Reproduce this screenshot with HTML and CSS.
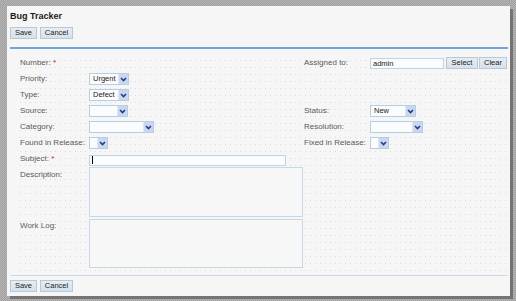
FILE: index.html
```html
<!DOCTYPE html>
<html>
<head>
<meta charset="utf-8">
<link rel="stylesheet" href="styles.css">
</head>
<body>
<div class="panel">
  <div class="title">Bug Tracker</div>
  <div class="toolbar">
    <button class="btn btn-save">Save</button>
    <button class="btn btn-cancel">Cancel</button>
  </div>
  <div class="rule"></div>
  <div class="form">
    <div class="lbl r1">Number: <span class="req">*</span></div>
    <div class="fld r1"></div>
    <div class="lbl r1">Assigned to:</div>
    <div class="fld r1 assign">
      <div class="input w-assign">admin</div>
      <button class="btn btn-select">Select</button>
      <button class="btn btn-clear">Clear</button>
    </div>

    <div class="lbl">Priority:</div>
    <div class="fld"><div class="select w40"><span>Urgent</span><i class="arrow"><svg width="7" height="5" viewBox="0 0 7 5"><path d="M1 1 L3.5 3.5 L6 1" fill="none" stroke="#1e3d8a" stroke-width="1.6"/></svg></i></div></div>
    <div class="lbl"></div><div class="fld"></div>

    <div class="lbl">Type:</div>
    <div class="fld"><div class="select w40"><span>Defect</span><i class="arrow"><svg width="7" height="5" viewBox="0 0 7 5"><path d="M1 1 L3.5 3.5 L6 1" fill="none" stroke="#1e3d8a" stroke-width="1.6"/></svg></i></div></div>
    <div class="lbl"></div><div class="fld"></div>

    <div class="lbl">Source:</div>
    <div class="fld"><div class="select w39"><span></span><i class="arrow"><svg width="7" height="5" viewBox="0 0 7 5"><path d="M1 1 L3.5 3.5 L6 1" fill="none" stroke="#1e3d8a" stroke-width="1.6"/></svg></i></div></div>
    <div class="lbl">Status:</div>
    <div class="fld"><div class="select w46"><span>New</span><i class="arrow"><svg width="7" height="5" viewBox="0 0 7 5"><path d="M1 1 L3.5 3.5 L6 1" fill="none" stroke="#1e3d8a" stroke-width="1.6"/></svg></i></div></div>

    <div class="lbl">Category:</div>
    <div class="fld"><div class="select w65"><span></span><i class="arrow"><svg width="7" height="5" viewBox="0 0 7 5"><path d="M1 1 L3.5 3.5 L6 1" fill="none" stroke="#1e3d8a" stroke-width="1.6"/></svg></i></div></div>
    <div class="lbl">Resolution:</div>
    <div class="fld"><div class="select w53"><span></span><i class="arrow"><svg width="7" height="5" viewBox="0 0 7 5"><path d="M1 1 L3.5 3.5 L6 1" fill="none" stroke="#1e3d8a" stroke-width="1.6"/></svg></i></div></div>

    <div class="lbl">Found in Release:</div>
    <div class="fld"><div class="select w19"><span></span><i class="arrow"><svg width="7" height="5" viewBox="0 0 7 5"><path d="M1 1 L3.5 3.5 L6 1" fill="none" stroke="#1e3d8a" stroke-width="1.6"/></svg></i></div></div>
    <div class="lbl">Fixed in Release:</div>
    <div class="fld"><div class="select w19"><span></span><i class="arrow"><svg width="7" height="5" viewBox="0 0 7 5"><path d="M1 1 L3.5 3.5 L6 1" fill="none" stroke="#1e3d8a" stroke-width="1.6"/></svg></i></div></div>

    <div class="lbl">Subject: <span class="req">*</span></div>
    <div class="fld"><div class="input w-subject"><span class="caret"></span></div></div>
    <div class="lbl"></div><div class="fld"></div>

    <div class="lbl top">Description:</div>
    <div class="fld top"><div class="textarea h-desc"></div></div>
    <div class="lbl"></div><div class="fld"></div>

    <div class="lbl top">Work Log:</div>
    <div class="fld top"><div class="textarea h-log"></div></div>
    <div class="lbl"></div><div class="fld"></div>
  </div>
  <div class="rule2"></div>
  <div class="toolbar bottom">
    <button class="btn btn-save">Save</button>
    <button class="btn btn-cancel">Cancel</button>
  </div>
</div>
</body>
</html>
```

FILE: styles.css
```css
html, body {
  margin: 0;
  padding: 0;
}
body {
  width: 516px;
  height: 301px;
  overflow: hidden;
  background: repeating-conic-gradient(#9f9f9f 0 25%, #b6b6b6 0 50%) 0 0 / 2px 2px;
  font-family: "Liberation Sans", Arial, sans-serif;
}
.panel {
  margin: 6px 0 0 7px;
  width: 503px;
  height: 290px;
  box-sizing: border-box;
  padding: 0 2px 0 3px;
  background: #f6f6f6;
  box-shadow: 3px 3px 0 #747474;
  display: flex;
  flex-direction: column;
}
.title {
  height: 20px;
  line-height: 15px;
  padding-top: 3px;
  box-sizing: border-box;
  font-size: 9px;
  font-weight: bold;
  color: #1a1a1a;
}
.toolbar {
  display: flex;
  gap: 3px;
  height: 12px;
  margin-top: 1px;
}
.toolbar.bottom {
  margin-top: 4px;
}
.btn {
  height: 12px;
  box-sizing: border-box;
  padding: 0;
  margin: 0;
  font-family: "Liberation Sans", Arial, sans-serif;
  font-size: 7.5px;
  line-height: 10px;
  color: #222;
  border: 1px solid #b9c8d6;
  background: linear-gradient(#e6edf3, #d6e1ea);
  text-align: center;
}
.btn-save { width: 27px; }
.btn-cancel { width: 33px; }
.btn-select { width: 32px; margin-left: 2px; }
.btn-clear { width: 28px; margin-left: 1px; }
.rule {
  margin-top: 8px;
  height: 2px;
  background: #72a6d9;
}
.form {
  height: 226px;
  box-sizing: border-box;
  padding: 6px 2px 0 10px;
  display: grid;
  grid-template-columns: 69px 215px 66px 1fr;
  grid-template-rows: repeat(7, 16px) 51px 50px;
  background-color: #f6f6f6;
  background-image: radial-gradient(circle, #dcdcdc 0.6px, transparent 0.9px);
  background-size: 5px 7px;
  background-position: 8px 2px;
  background-clip: content-box;
  background-origin: content-box;
}
.lbl {
  font-size: 8px;
  line-height: 16px;
  color: #5a5a5a;
  white-space: nowrap;
}
.req { color: #c02020; }
.fld {
  display: flex;
  align-items: center;
}
.fld.top { align-items: flex-start; }
.assign { align-items: center; }
.select {
  height: 12px;
  box-sizing: border-box;
  border: 1px solid #b7cde3;
  background: #fbfcfe;
  display: flex;
  align-items: center;
  font-size: 7.5px;
  color: #222;
}
.select span {
  flex: 1;
  padding-left: 3px;
  line-height: 10px;
}
.select .arrow {
  width: 10px;
  height: 10px;
  box-sizing: border-box;
  background: #c9d8ef;
  border-left: 1px solid #dde7f5;
  display: flex;
  align-items: center;
  justify-content: center;
}
.select .arrow svg { display: block; }
.w19 { width: 19px; }
.w39 { width: 39px; }
.w40 { width: 40px; }
.w46 { width: 46px; }
.w53 { width: 53px; }
.w65 { width: 65px; }
.input {
  height: 11px;
  box-sizing: border-box;
  border: 1px solid #bfd3e4;
  background: #fbfcfd;
  font-size: 7.5px;
  line-height: 9px;
  padding-left: 2px;
  color: #222;
}
.w-assign { width: 74px; }
.w-subject { width: 197px; margin-top: 2px; }
.caret {
  display: inline-block;
  width: 1px;
  height: 8px;
  background: #000;
  vertical-align: top;
}
.textarea {
  width: 214px;
  box-sizing: border-box;
  border: 1px solid #c4d9e8;
  background: #f7f7f7;
}
.h-desc { height: 50px; margin-top: 0; }
.h-log { height: 49px; margin-top: 1px; }
.rule2 {
  margin-top: 0;
  height: 1px;
  background: #c8dbe4;
}
```
